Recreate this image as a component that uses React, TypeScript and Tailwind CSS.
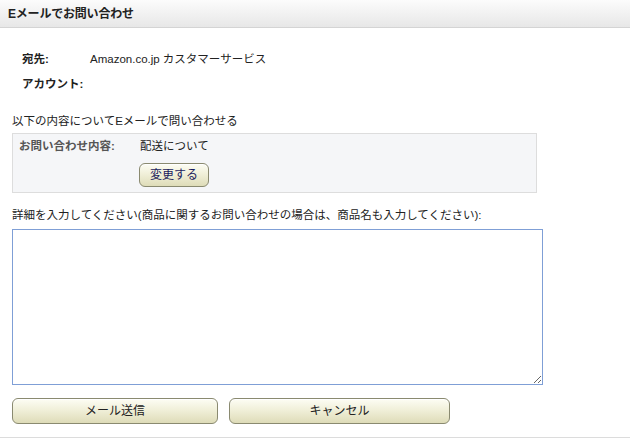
export default function App() {
  const btn =
    "rounded-[6px] border border-[#8a8a70] bg-gradient-to-b from-[#fdfdf4] via-[#efeed6] to-[#dedcb8] shadow-[inset_0_1px_0_#ffffff] text-[12px]";
  return (
    <div
      className="w-[630px] h-[442px] bg-white text-[11.5px] text-[#222] overflow-hidden"
      style={{ fontFamily: '"Liberation Sans", "Noto Sans CJK JP", sans-serif' }}
    >
      <div className="h-[28px] flex items-center pl-[8px] bg-gradient-to-b from-[#fcfcfc] to-[#e7e7e7] border-b border-[#d4d4d4]">
        <span className="font-bold text-[12px] tracking-[-0.2px]">Eメールでお問い合わせ</span>
      </div>

      <div className="pl-[22px] pt-[23px]">
        <div className="flex h-[18px] items-center">
          <span className="w-[68px] font-bold">宛先:</span>
          <span>Amazon.co.jp カスタマーサービス</span>
        </div>
        <div className="flex h-[18px] items-center mt-[7px]">
          <span className="font-bold">アカウント:</span>
        </div>
      </div>

      <div className="px-[12px]">
        <div className="mt-[21px] h-[14px] flex items-center">以下の内容についてEメールで問い合わせる</div>

        <div className="mt-[4px] w-[525px] h-[60px] bg-[#f5f6f8] border border-[#dddddd] pl-[6px] pt-[5px]">
          <div className="flex h-[16px] items-center">
            <span className="w-[121px] font-bold text-[#555]">お問い合わせ内容:</span>
            <span>配送について</span>
          </div>
          <button className={`${btn} ml-[120px] mt-[8px] w-[70px] h-[24px] text-[#1b1b5e]`}>変更する</button>
        </div>

        <div className="mt-[16px] h-[14px] flex items-center">
          詳細を入力してください(商品に関するお問い合わせの場合は、商品名も入力してください):
        </div>

        <textarea
          className="mt-[6px] block w-[531px] h-[156px] border border-[#7f9fd6] outline-none p-[2px] resize"
          defaultValue=""
        />

        <div className="flex gap-[11px] mt-[13px]">
          <button className={`${btn} w-[206px] h-[26px]`}>メール送信</button>
          <button className={`${btn} w-[221px] h-[26px]`}>キャンセル</button>
        </div>
      </div>

      <div className="mt-[13px] border-t border-[#dcdcdc]" />
    </div>
  );
}
